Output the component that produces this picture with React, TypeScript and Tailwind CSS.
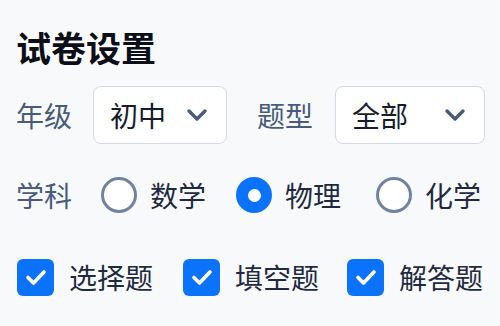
const font = { fontFamily: '"Noto Sans CJK SC", "Noto Sans", sans-serif' }

function Select({ value, width }: { value: string; width: string }) {
  return (
    <div
      className={`flex h-[58px] items-center justify-between rounded-lg border border-[#d3dae6] bg-white pl-[16px] pr-[18px] ${width}`}
    >
      <span className="text-[28px] leading-none text-[#161c2b]">{value}</span>
      <svg width="22" height="14" viewBox="0 0 22 14" fill="none">
        <path d="M3 3l8 8 8-8" stroke="#4a5b7a" strokeWidth="3.4" strokeLinecap="round" strokeLinejoin="round" />
      </svg>
    </div>
  )
}

function Radio({ label, checked }: { label: string; checked?: boolean }) {
  return (
    <div className="flex items-center gap-[13px]">
      {checked ? (
        <span className="flex h-[36px] w-[36px] items-center justify-center rounded-full bg-[#0b72fb]">
          <span className="h-[13px] w-[13px] rounded-full bg-white" />
        </span>
      ) : (
        <span className="h-[36px] w-[36px] rounded-full border-[3px] border-[#7283a2] bg-white" />
      )}
      <span className="text-[28px] leading-none text-[#1f2a40]">{label}</span>
    </div>
  )
}

function Check({ label }: { label: string }) {
  return (
    <div className="flex items-center gap-[15px]">
      <span className="flex h-[37px] w-[37px] items-center justify-center rounded-md bg-[#0b72fb]">
        <svg width="22" height="18" viewBox="0 0 22 18" fill="none">
          <path d="M3 9.5l5.5 5.5L19 4" stroke="white" strokeWidth="3.6" strokeLinecap="round" strokeLinejoin="round" />
        </svg>
      </span>
      <span className="text-[28px] leading-none text-[#1f2a40]">{label}</span>
    </div>
  )
}

export default function App() {
  return (
    <div className="flex h-[326px] w-[500px] flex-col bg-[#f8f9fb] pl-4 pt-[25px]" style={font}>
      <h1 className="h-[44px] text-[35px] font-bold leading-[44px] text-[#0c0f17]">试卷设置</h1>

      <div className="mt-[17px] flex h-[58px] items-center">
        <span className="text-[28px] leading-none text-[#485b7c]">年级</span>
        <div className="ml-[21px]">
          <Select value="初中" width="w-[134px]" />
        </div>
        <span className="ml-[30px] text-[28px] leading-none text-[#485b7c]">题型</span>
        <div className="ml-[22px]">
          <Select value="全部" width="w-[150px]" />
        </div>
      </div>

      <div className="mt-[22px] flex h-[58px] items-center">
        <span className="mr-[29px] text-[28px] leading-none text-[#485b7c]">学科</span>
        <Radio label="数学" />
        <div className="ml-[30px]">
          <Radio label="物理" checked />
        </div>
        <div className="ml-[35px]">
          <Radio label="化学" />
        </div>
      </div>

      <div className="mt-[24px] flex h-[58px] items-center pl-px">
        <Check label="选择题" />
        <div className="ml-[30px]">
          <Check label="填空题" />
        </div>
        <div className="ml-[28px]">
          <Check label="解答题" />
        </div>
      </div>
    </div>
  )
}
